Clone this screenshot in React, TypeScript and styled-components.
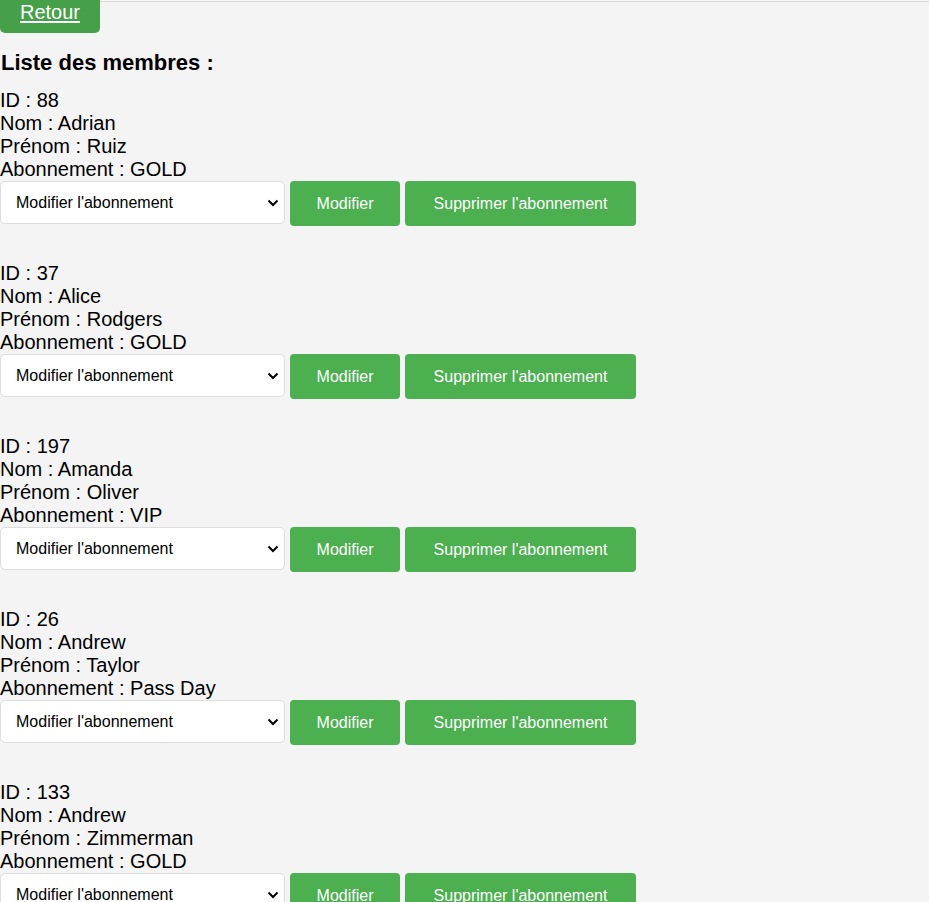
import React from "react";
import styled, { createGlobalStyle } from "styled-components";

const GlobalStyle = createGlobalStyle`
  html, body {
    margin: 0;
    padding: 0;
  }
  body {
    background: linear-gradient(#dcdcdc, #dcdcdc) 0 1px / 100% 1px no-repeat, #f4f4f4;
    font-family: "Liberation Sans", Arial, sans-serif;
    color: #000;
  }
`;

const Page = styled.div`
  display: flex;
  flex-direction: column;
  align-items: flex-start;
  padding-bottom: 40px;
`;

const BackLink = styled.a`
  display: block;
  width: 100px;
  height: 33px;
  box-sizing: border-box;
  padding-top: 1px;
  background: #46a049;
  border-radius: 0 0 5px 5px;
  color: #fff;
  font-size: 20px;
  line-height: 23px;
  text-align: center;
  text-decoration: underline;
  text-underline-offset: 2px;
  cursor: pointer;
`;

const Title = styled.h2`
  margin: 17px 0 14px 1px;
  font-size: 22px;
  line-height: 25px;
  font-weight: bold;
`;

const MemberList = styled.div`
  display: flex;
  flex-direction: column;
  gap: 36px;
`;

const Member = styled.div`
  display: flex;
  flex-direction: column;
`;

const Line = styled.div`
  font-size: 20px;
  line-height: 23px;
`;

const Actions = styled.div`
  display: flex;
  align-items: flex-start;
  gap: 5px;
`;

const SelectWrap = styled.div`
  position: relative;
  width: 285px;
  height: 43px;
`;

const Select = styled.select`
  appearance: none;
  -webkit-appearance: none;
  width: 100%;
  height: 100%;
  box-sizing: border-box;
  padding: 0 36px 0 15px;
  border: 1px solid #dddddd;
  border-radius: 5px;
  background: #fff;
  font-family: "Liberation Sans", Arial, sans-serif;
  font-size: 16px;
  color: #000;
  outline: none;
`;

const Chevron = styled.svg`
  position: absolute;
  right: 6px;
  top: 16px;
  width: 12px;
  height: 12px;
  pointer-events: none;
`;

const Button = styled.button<{ $width: number }>`
  width: ${(p) => p.$width}px;
  height: 45px;
  padding: 0;
  border: none;
  border-radius: 4px;
  background: #4caf50;
  color: #fff;
  font-family: "Liberation Sans", Arial, sans-serif;
  font-size: 16px;
  cursor: pointer;
`;

const members = [
  { id: 88, nom: "Adrian", prenom: "Ruiz", abo: "GOLD" },
  { id: 37, nom: "Alice", prenom: "Rodgers", abo: "GOLD" },
  { id: 197, nom: "Amanda", prenom: "Oliver", abo: "VIP" },
  { id: 26, nom: "Andrew", prenom: "Taylor", abo: "Pass Day" },
  { id: 133, nom: "Andrew", prenom: "Zimmerman", abo: "GOLD" },
  { id: 54, nom: "Anna", prenom: "Brooks", abo: "VIP" },
];

export default function App() {
  return (
    <>
      <GlobalStyle />
      <Page>
        <BackLink>Retour</BackLink>
        <Title>Liste des membres :</Title>
        <MemberList>
          {members.map((m) => (
            <Member key={m.id}>
              <Line>ID : {m.id}</Line>
              <Line>Nom : {m.nom}</Line>
              <Line>Prénom : {m.prenom}</Line>
              <Line>Abonnement : {m.abo}</Line>
              <Actions>
                <SelectWrap>
                  <Select defaultValue="">
                    <option value="">Modifier l'abonnement</option>
                    <option value="GOLD">GOLD</option>
                    <option value="VIP">VIP</option>
                    <option value="Pass Day">Pass Day</option>
                  </Select>
                  <Chevron viewBox="0 0 12 12">
                    <path d="M1.5 3.5 L6 8 L10.5 3.5" fill="none" stroke="#000" strokeWidth="2" />
                  </Chevron>
                </SelectWrap>
                <Button $width={110}>Modifier</Button>
                <Button $width={231}>Supprimer l'abonnement</Button>
              </Actions>
            </Member>
          ))}
        </MemberList>
      </Page>
    </>
  );
}
